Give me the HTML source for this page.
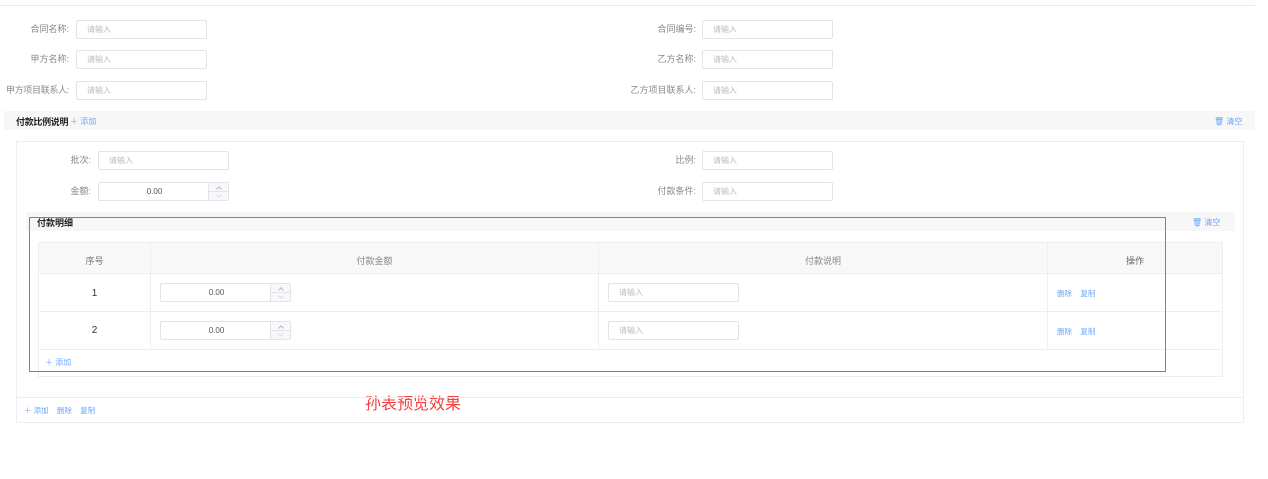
<!DOCTYPE html>
<html><head><meta charset="utf-8"><style>
*{margin:0;padding:0;box-sizing:border-box}
body{width:1268px;height:479px;background:#fff;position:relative;overflow:hidden;font-family:"Liberation Sans","Noto Sans CJK SC",sans-serif;color:#888}
.a{position:absolute}
.lbl{position:absolute;font-size:9px;color:#888;text-align:right;line-height:19px}
.inp{position:absolute;height:19px;width:131px;border:1px solid #e2e4ea;border-radius:2px;font-size:8px;color:#bbb;padding-left:10px;line-height:17px;background:#fff}
.num{position:absolute;height:19px;width:131px;border:1px solid #e2e4ea;border-radius:2px;font-size:8px;color:#555;line-height:17px;background:#fff}
.num span{position:absolute;left:0;width:111px;text-align:center}
.num i{position:absolute;right:0;top:0;width:20px;height:17px;border-left:1px solid #e2e4ea;background:#f7f8fa}
.num i:after{content:"";position:absolute;left:0;right:0;top:8px;border-top:1px solid #e2e4ea}
.num i b{position:absolute;left:8px;width:4px;height:4px;border-left:1px solid #bbb;border-top:1px solid #bbb;transform:rotate(45deg);top:4px}
.num i b.d{transform:rotate(225deg);top:10px;border-color:#ddd}
.blue{color:#6aa6f8;font-size:8px}
.bar{position:absolute;background:#f7f7f8}
.ttl{position:absolute;font-size:9px;font-weight:bold;color:#222}
.r{position:absolute;background:#ff4d4d}
</style></head><body>
<div class="a" style="left:0;top:5px;width:1255px;border-top:1px solid #e8e8e8"></div>

<div class="lbl" style="left:0;width:69px;top:20px">合同名称:</div><div class="inp" style="left:76px;top:20px">请输入</div>
<div class="lbl" style="left:600px;width:96px;top:20px">合同编号:</div><div class="inp" style="left:702px;top:20px">请输入</div>
<div class="lbl" style="left:0;width:69px;top:50px">甲方名称:</div><div class="inp" style="left:76px;top:50px">请输入</div>
<div class="lbl" style="left:600px;width:96px;top:50px">乙方名称:</div><div class="inp" style="left:702px;top:50px">请输入</div>
<div class="lbl" style="left:0;width:69px;top:81px;letter-spacing:-0.3px">甲方项目联系人:</div><div class="inp" style="left:76px;top:81px">请输入</div>
<div class="lbl" style="left:560px;width:136px;top:81px">乙方项目联系人:</div><div class="inp" style="left:702px;top:81px">请输入</div>

<div class="bar" style="left:4px;top:111px;width:1251px;height:19px"></div>
<div class="ttl" style="left:16px;top:115px;letter-spacing:-0.3px">付款比例说明</div>
<div class="a blue" style="left:70px;top:116px">＋ 添加</div>
<div class="a blue" style="left:1214px;top:116px">🗑 清空</div>

<div class="a" style="left:16px;top:141px;width:1228px;height:282px;border:1px solid #eeeef2"></div>
<div class="lbl" style="left:40px;width:51px;top:151px">批次:</div><div class="inp" style="left:98px;top:151px">请输入</div>
<div class="lbl" style="left:600px;width:96px;top:151px">比例:</div><div class="inp" style="left:702px;top:151px">请输入</div>
<div class="lbl" style="left:40px;width:51px;top:182px">金额:</div><div class="num" style="left:98px;top:182px"><span>0.00</span><i><b></b><b class="d"></b></i></div>
<div class="lbl" style="left:600px;width:96px;top:182px">付款条件:</div><div class="inp" style="left:702px;top:182px">请输入</div>

<div class="bar" style="left:26px;top:212px;width:1209px;height:19px"></div>
<div class="ttl" style="left:37px;top:216px">付款明细</div>
<div class="a blue" style="left:1192px;top:217px">🗑 清空</div>

<div class="a" style="left:38px;top:242px;width:1185px;height:135px;border:1px solid #ebeef5"></div>
<div class="a" style="left:39px;top:243px;width:1183px;height:31px;background:#f8f8f9;border-bottom:1px solid #ebeef5"></div>
<div class="a" style="left:39px;top:311px;width:1183px;border-top:1px solid #ebeef5"></div>
<div class="a" style="left:39px;top:349px;width:1183px;border-top:1px solid #ebeef5"></div>
<div class="a" style="left:150px;top:243px;height:106px;border-left:1px solid #ebeef5"></div>
<div class="a" style="left:598px;top:243px;height:106px;border-left:1px solid #ebeef5"></div>
<div class="a" style="left:1047px;top:243px;height:106px;border-left:1px solid #ebeef5"></div>
<div class="a" style="left:39px;width:111px;top:254px;text-align:center;font-size:9px;color:#777">序号</div>
<div class="a" style="left:151px;width:447px;top:254px;text-align:center;font-size:9px;color:#888">付款金额</div>
<div class="a" style="left:599px;width:448px;top:254px;text-align:center;font-size:9px;color:#888">付款说明</div>
<div class="a" style="left:1048px;width:174px;top:254px;text-align:center;font-size:9px;color:#666">操作</div>
<div class="a" style="left:39px;width:111px;top:288px;text-align:center;font-size:10px;color:#333">1</div>
<div class="a" style="left:39px;width:111px;top:325px;text-align:center;font-size:10px;color:#333">2</div>
<div class="num" style="left:160px;top:283px"><span>0.00</span><i><b></b><b class="d"></b></i></div>
<div class="num" style="left:160px;top:321px"><span>0.00</span><i><b></b><b class="d"></b></i></div>
<div class="inp" style="left:608px;top:283px">请输入</div>
<div class="inp" style="left:608px;top:321px">请输入</div>
<div class="a blue" style="left:1057px;top:288px;font-size:7.5px">删除&nbsp;&nbsp;&nbsp;&nbsp;复制</div>
<div class="a blue" style="left:1057px;top:326px;font-size:7.5px">删除&nbsp;&nbsp;&nbsp;&nbsp;复制</div>
<div class="a blue" style="left:45px;top:357px">＋ 添加</div>

<div class="r" style="left:29px;top:217px;width:1137px;height:1px"></div>
<div class="r" style="left:29px;top:371px;width:1137px;height:1px"></div>
<div class="r" style="left:29px;top:217px;width:1px;height:155px"></div>
<div class="r" style="left:1165px;top:217px;width:1px;height:155px"></div>
<div class="a" style="left:365px;top:390px;font-size:16px;color:#f04040">孙表预览效果</div>

<div class="a" style="left:17px;top:397px;width:1226px;border-top:1px solid #eeeef2"></div>
<div class="a blue" style="left:24px;top:405px;font-size:7.5px">＋ 添加&nbsp;&nbsp;&nbsp;&nbsp;删除&nbsp;&nbsp;&nbsp;&nbsp;复制</div>
</body></html>
